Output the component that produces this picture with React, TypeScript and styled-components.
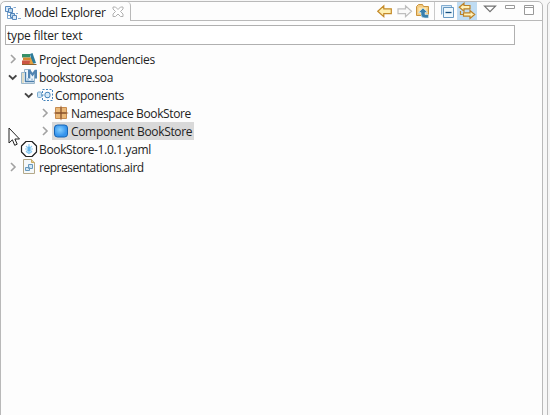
import React from "react";
import styled, { createGlobalStyle } from "styled-components";

const GlobalStyle = createGlobalStyle`
  * { box-sizing: border-box; }
  body { margin: 0; overflow: hidden; background: #f7f7f7; }
  svg { display: block; flex: none; }
`;

const Workbench = styled.div`
  display: flex;
  gap: 4px;
  width: 550px;
  height: 415px;
  overflow: hidden;
  position: relative;
  color: #222;
  font: 12px/18px "Open Sans", "Noto Sans", sans-serif;
`;

const ViewPanel = styled.section`
  width: 543px;
  height: 425px;
  margin-top: 1px;
  flex: none;
  border: 1px solid #b9b9b9;
  border-radius: 5px 5px 0 0;
  background: #fdfdfd;
`;

const NextPanel = styled.section`
  width: 20px;
  height: 425px;
  flex: none;
  border: 1px solid #bcbcbc;
  border-radius: 5px 0 0 0;
  background: #f6f6f6;
  margin-top: 1px;
`;

const TabBar = styled.header`
  display: flex;
  height: 19px;
`;

const Tab = styled.div`
  display: flex;
  align-items: center;
  width: 130px;
  flex: none;
  padding-left: 4px;
  border-right: 1px solid #b9b9b9;
  border-top-right-radius: 4px;
`;

const TabTitle = styled.span`
  width: 91px;
  padding: 3px 0 0 3px;
  white-space: nowrap;
  letter-spacing: -0.27px;
`;

const Toolbar = styled.div`
  display: flex;
  flex: 1;
  padding-left: 244px;
  border-bottom: 1px solid #b9b9b9;
`;

const ToolButton = styled.button<{ $active?: boolean; $width?: number }>`
  display: flex;
  justify-content: center;
  width: ${(p) => p.$width ?? 20}px;
  height: 18px;
  flex: none;
  padding: 0;
  border: 0;
  background: ${(p) => (p.$active ? "#bfdcf3" : "transparent")};
`;

const Divider = styled.div`
  width: 1px;
  height: 18px;
  margin: 0 2px;
  background: #c9c9c9;
`;

const FilterInput = styled.input`
  display: block;
  width: 510px;
  height: 20px;
  margin: 4px 0 5px 4px;
  padding: 1px 0 0 1px;
  border: 1px solid #b0b0b0;
  background: #fff;
  color: #222;
  font: inherit;
  letter-spacing: -0.18px;
  outline: 0;
  &::placeholder { color: #222; opacity: 1; }
`;

const Tree = styled.ul`
  margin: 0;
  padding: 0;
  list-style: none;
`;

const TreeRow = styled.li<{ $level: number }>`
  display: flex;
  align-items: center;
  height: 18px;
  padding-left: ${(p) => 4 + p.$level * 16}px;
`;

const Twisty = styled.span`
  width: 15px;
  height: 16px;
  flex: none;
`;

const TreeItem = styled.span<{ $selected?: boolean }>`
  display: flex;
  align-items: center;
  height: 18px;
  padding: 0 2px 0 1px;
  gap: 2px;
  background: ${(p) => (p.$selected ? "#d9d9d9" : "transparent")};
`;

const TreeLabel = styled.span<{ $tracking: number }>`
  margin-top: 2px;
  white-space: nowrap;
  letter-spacing: ${(p) => p.$tracking}px;
`;

const Pointer = styled.svg`
  position: absolute;
  left: 8px;
  top: 127px;
`;

const ExplorerIcon = () => (
  <svg width="16" height="18" viewBox="0 0 16 18" fill="none">
    <path d="M2.5 9v6.5H7M3 12.5h3" stroke="#7ba4cd" />
    <path d="M.5 3.5h5v5h-5z" fill="#d9eafa" stroke="#5889bd" />
    <path d="M3.5 5.5h4v4h-4z" fill="#b9d6ee" stroke="#4f83b9" />
    <path d="M5.5 10.5h4v4h-4z" fill="#b9d6ee" stroke="#4f83b9" />
    <path d="M7.5 12.5h4v4h-4z" fill="#d9eafa" stroke="#5889bd" />
    <path d="M8.5 4.5H11M11 10.5h2M13 15.5h3" stroke="#83aad2" />
  </svg>
);

const CloseIcon = () => (
  <svg width="12" height="12" viewBox="0 0 12 12" fill="#fff" stroke="#b0b0b0">
    <path d="M1 1h2.5L6 3.5 8.5 1H11v2L8.5 5.5 11 8v2.5H8.5L6 8l-2.5 2.5H1V8l2.5-2.5L1 3z" />
  </svg>
);

const BackIcon = () => (
  <svg width="16" height="18" viewBox="0 0 16 18">
    <path d="M.8 9.3 6.8 3.8v3h7.5v4.8H6.8v3z" fill="#fff0b1" stroke="#c48a29" strokeWidth="1.2" />
  </svg>
);

const ForwardIcon = () => (
  <svg width="16" height="18" viewBox="0 0 16 18">
    <path d="M14.5 9.3 8.5 3.8v3H1v4.8h7.5v3z" fill="#fafafa" stroke="#bebebe" strokeWidth="1.2" />
  </svg>
);

const UpFolderIcon = () => (
  <svg width="16" height="18" viewBox="0 0 16 18">
    <path d="M1.5 13.5v-9l2-2h4l1 2h5v9z" fill="#f3cb83" stroke="#ca943d" />
    <path d="M3.5 5.5h8v6h-8z" fill="#ffe6ab" />
    <path d="m8 6 4.5 4.5H10v2h3.5v3.5H10q-4 0-4-3.5v-2H3.5z" fill="#397fac" stroke="#d9edf7" strokeWidth=".6" />
  </svg>
);

const CollapseIcon = () => (
  <svg width="16" height="18" viewBox="0 0 16 18">
    <path d="M2.5 12.5v-9h10v3" fill="#d7e9f8" stroke="#83add0" />
    <path d="M4.5 5.5h10v10h-10z" fill="#eef8fd" stroke="#6798c1" />
    <path d="M6.5 10.5h6" stroke="#134d80" strokeWidth="1.3" />
  </svg>
);

const LinkIcon = () => (
  <svg width="18" height="18" viewBox="0 0 18 18" fill="#fff1b7" stroke="#bb8127" strokeWidth="1.2">
    <path d="M1.3 5.2 6 1.2v2.3h6v3.4H6v2.3z" />
    <path d="M16.7 12.5 12 8.5v2.3H5.5v3.4H12v2.3z" />
    <path d="M2.5 9v3.5h3" fill="none" />
  </svg>
);

const MenuIcon = () => (
  <svg width="14" height="18" viewBox="0 0 14 18">
    <path d="M1.5 4.2h11L7 9.7z" fill="#fff" stroke="#717171" strokeWidth="1.2" />
  </svg>
);

const MinimizeIcon = () => (
  <svg width="12" height="18" viewBox="0 0 12 18">
    <path d="M1.5 3.5h9v3h-9z" fill="#fff" stroke="#999" />
  </svg>
);

const MaximizeIcon = () => (
  <svg width="12" height="18" viewBox="0 0 12 18">
    <path d="M1.5 3.5h9v9h-9zM1.5 5.5h9" fill="#fff" stroke="#999" />
  </svg>
);

const Chevron = ({ open }: { open: boolean }) => (
  <svg width="16" height="16" viewBox="0 0 16 16" fill="none">
    {open ? (
      <path d="m4 6.3 3.7 3.7 3.7-3.7" stroke="#444" strokeWidth="1.9" />
    ) : (
      <path d="m6 4 4 4-4 4" stroke="#a2a2a2" strokeWidth="1.6" />
    )}
  </svg>
);

const LibraryIcon = () => (
  <svg width="16" height="16" viewBox="0 0 16 16">
    <path d="M1 3h8v3.5H1z" fill="#369068" />
    <path d="M2 6.5h8v3H2z" fill="#d38a32" />
    <path d="M1 9.5h9V13H1z" fill="#cb5443" />
    <path d="m9 3 2.5-1L15 12l-4 1z" fill="#2d7b99" />
    <path d="m8.5 13 1-7 3 7z" fill="#e5a03f" />
    <path d="M1 13.5h14.5" stroke="#8f622d" />
  </svg>
);

const SoaIcon = () => (
  <svg width="16" height="16" viewBox="0 0 16 16">
    <path d="M.5 3.5h3v-3h6v4h4v10H.5z" fill="#edf5fb" stroke="#9bb7cb" />
    <path d="M2 4v10" stroke="#d3c493" />
    <path d="M4.5 3v10M4 12.5h9" fill="none" stroke="#4c7fac" strokeWidth="1.4" />
    <path d="M7 9.5V.7h2.2l2.3 3.1 2.3-3.1H16v8.8h-2.3V4.4l-2.2 3-2.2-3v5.1z" fill="#5285b2" />
    <path d="M6 9h2v3H6zM10 9.5h2v2h-2z" fill="#adcae2" />
  </svg>
);

const ComponentsIcon = () => (
  <svg width="16" height="16" viewBox="0 0 16 16" fill="none" stroke="#4383bb">
    <path d="M5.5 2.5h10v11h-10z" strokeDasharray="2 1.5" />
    <rect x=".5" y="5" width="4" height="5.5" rx="1" fill="#cce4f5" stroke="#79a9ce" />
    <rect x="8" y="5.3" width="5" height="5.4" rx="2" fill="#d8ebf8" />
    <path d="M5 8h3" stroke="#8db5d4" />
  </svg>
);

const NamespaceIcon = () => (
  <svg width="16" height="16" viewBox="0 0 16 16">
    <path d="M2.5 2.5h11v11h-11z" fill="#eab878" stroke="#c68b50" />
    <path d="M8 2v12M2 8h12" stroke="#87502a" strokeWidth="1.3" />
    <path d="M8 .8v2M8 13.2v2M.8 8h2M13.2 8h2" stroke="#b78256" />
  </svg>
);

const ComponentIcon = () => (
  <svg width="16" height="16" viewBox="0 0 16 16">
    <defs>
      <radialGradient id="componentFill" cx="42%" cy="40%">
        <stop stopColor="#86d0ff" />
        <stop offset="1" stopColor="#3594ed" />
      </radialGradient>
    </defs>
    <rect x="1.5" y="2" width="13" height="12" rx="3" fill="url(#componentFill)" stroke="#1764b3" />
  </svg>
);

const YamlIcon = () => (
  <svg width="16" height="16" viewBox="0 0 16 16" overflow="visible">
    <path d="M5 .5h6l4.5 4.5v6L11 15.5H5L.5 11V5z" fill="#fff" stroke="#222" strokeWidth="1.2" strokeLinejoin="round" />
    <path d="M8 3v9.5M4 8h8M5 10.5l3 2 3-2M5 5l6 6M11 5l-6 6" stroke="#8dcaf0" strokeWidth="1.2" fill="none" />
    <path d="M8 5.5v5" stroke="#3c9bdf" />
  </svg>
);

const AirdIcon = () => (
  <svg width="16" height="16" viewBox="0 0 16 16">
    <path d="M2.5.5h8l3 3v11h-11z" fill="#f4f8fa" stroke="#b4a98a" />
    <path d="M10.5.5v3h3" fill="#e9d194" stroke="#c8aa60" />
    <path d="M4.5 8.5h4v3h-4zM7.5 5.5h4v4h-4z" fill="#d2e6f4" stroke="#6799bd" />
  </svg>
);

type Node = {
  label: string;
  level: number;
  icon: React.ComponentType;
  tracking: number;
  open?: boolean;
  leaf?: boolean;
  selected?: boolean;
};

const nodes: Node[] = [
  { label: "Project Dependencies", level: 0, icon: LibraryIcon, tracking: -0.3 },
  { label: "bookstore.soa", level: 0, icon: SoaIcon, tracking: -0.45, open: true },
  { label: "Components", level: 1, icon: ComponentsIcon, tracking: -0.3, open: true },
  { label: "Namespace BookStore", level: 2, icon: NamespaceIcon, tracking: -0.38 },
  { label: "Component BookStore", level: 2, icon: ComponentIcon, tracking: -0.33, selected: true },
  { label: "BookStore-1.0.1.yaml", level: 0, icon: YamlIcon, tracking: -0.35, leaf: true },
  { label: "representations.aird", level: 0, icon: AirdIcon, tracking: -0.47 },
];

export default function App() {
  return (
    <>
      <GlobalStyle />
      <Workbench>
        <ViewPanel>
          <TabBar>
            <Tab>
              <ExplorerIcon />
              <TabTitle>Model Explorer</TabTitle>
              <CloseIcon />
            </Tab>
            <Toolbar>
              <ToolButton aria-label="Back"><BackIcon /></ToolButton>
              <ToolButton aria-label="Forward" $width={19}><ForwardIcon /></ToolButton>
              <ToolButton aria-label="Up" $width={18}><UpFolderIcon /></ToolButton>
              <Divider />
              <ToolButton aria-label="Collapse all"><CollapseIcon /></ToolButton>
              <ToolButton aria-label="Link with editor" $active><LinkIcon /></ToolButton>
              <ToolButton aria-label="View menu" $width={25}><MenuIcon /></ToolButton>
              <ToolButton aria-label="Minimize" $width={15}><MinimizeIcon /></ToolButton>
              <ToolButton aria-label="Maximize" $width={24}><MaximizeIcon /></ToolButton>
            </Toolbar>
          </TabBar>
          <FilterInput placeholder="type filter text" />
          <Tree>
            {nodes.map(({ label, level, icon: Icon, tracking, open, leaf, selected }) => (
              <TreeRow key={label} $level={level}>
                <Twisty>{!leaf && <Chevron open={!!open} />}</Twisty>
                <TreeItem $selected={selected}>
                  <Icon />
                  <TreeLabel $tracking={tracking}>{label}</TreeLabel>
                </TreeItem>
              </TreeRow>
            ))}
          </Tree>
        </ViewPanel>
        <NextPanel />
        <Pointer width="13" height="20" viewBox="0 0 13 20">
          <path d="M1 1v15l3.4-3.2 2.3 5.5 2.5-1.1-2.3-5.2h4.6z" fill="#fff" stroke="#222" />
        </Pointer>
      </Workbench>
    </>
  );
}
